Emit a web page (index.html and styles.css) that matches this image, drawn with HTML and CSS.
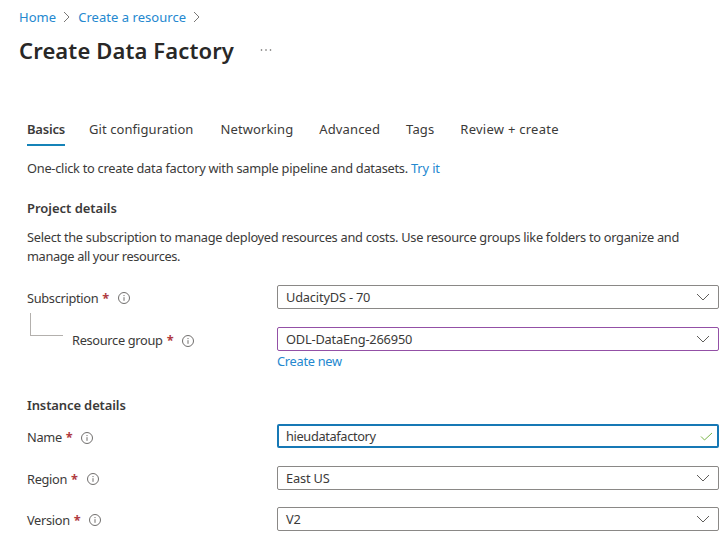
FILE: index.html
```
<!DOCTYPE html>
<html lang="en"><head><meta charset="utf-8"><title>Create Data Factory</title><link rel="stylesheet" href="styles.css"></head>
<body>
<nav class="crumbs"><a>Home</a><svg class="sep" viewBox="0 0 8 12"><path d="M1 1l5 5-5 5"/></svg><a>Create a resource</a><svg class="sep" viewBox="0 0 8 12"><path d="M1 1l5 5-5 5"/></svg></nav>
<header class="title"><h1>Create Data Factory</h1><svg class="more" viewBox="0 0 12 4"><circle cx="1.5" cy="2" r=".8"/><circle cx="6" cy="2" r=".8"/><circle cx="10.5" cy="2" r=".8"/></svg></header>
<main>
<div class="tabs"><span class="tab active">Basics</span><span class="tab git">Git configuration</span><span class="tab">Networking</span><span class="tab">Advanced</span><span class="tab">Tags</span><span class="tab">Review + create</span></div>
<p class="intro"><span>One-click to create data factory with sample pipeline and datasets.</span> <a>Try it</a></p>
<h2>Project details</h2>
<p class="desc"><span>Select the subscription to manage deployed resources and costs. Use resource groups like folders to organize and</span><br><span>manage all your resources.</span></p>
<div class="form project">
<div class="row"><label><span>Subscription</span><b>*</b><svg class="info" viewBox="0 0 12 12"><circle cx="6" cy="6" r="5.5"/><path d="M6 5.2v3.6M6 3v1.1"/></svg></label><div class="field"><span>UdacityDS - 70</span><svg class="chev" viewBox="0 0 14 8"><path d="M1 1l6 6 6-6"/></svg></div></div>
<div class="row group"><label><i class="elbow"></i><span>Resource group</span><b>*</b><svg class="info" viewBox="0 0 12 12"><circle cx="6" cy="6" r="5.5"/><path d="M6 5.2v3.6M6 3v1.1"/></svg></label><div class="field purple"><span>ODL-DataEng-266950</span><svg class="chev" viewBox="0 0 14 8"><path d="M1 1l6 6 6-6"/></svg></div></div>
<a class="new">Create new</a>
</div>
<h2 class="instance">Instance details</h2>
<div class="form fields">
<div class="row name"><label><span>Name</span><b>*</b><svg class="info" viewBox="0 0 12 12"><circle cx="6" cy="6" r="5.5"/><path d="M6 5.2v3.6M6 3v1.1"/></svg></label><div class="field focus"><span>hieudatafactory</span><svg class="check" viewBox="0 0 13 9"><path d="M1 4.5L4.5 8 12 1"/></svg></div></div>
<div class="row"><label><span>Region</span><b>*</b><svg class="info" viewBox="0 0 12 12"><circle cx="6" cy="6" r="5.5"/><path d="M6 5.2v3.6M6 3v1.1"/></svg></label><div class="field"><span>East US</span><svg class="chev" viewBox="0 0 14 8"><path d="M1 1l6 6 6-6"/></svg></div></div>
<div class="row"><label><span>Version</span><b>*</b><svg class="info" viewBox="0 0 12 12"><circle cx="6" cy="6" r="5.5"/><path d="M6 5.2v3.6M6 3v1.1"/></svg></label><div class="field"><span>V2</span><svg class="chev" viewBox="0 0 14 8"><path d="M1 1l6 6 6-6"/></svg></div></div>
</div>
</main>
</body></html>
```
FILE: styles.css
```
*{box-sizing:border-box}
body{margin:0;height:544px;overflow:hidden;background:#fff;color:#3b3a39;font:12.8px/19px "Noto Sans",sans-serif;letter-spacing:-.28px}
svg{fill:none;stroke:currentColor;flex:none}
a{color:#2488cf}
h1,h2,p{margin:0}
.crumbs{display:flex;align-items:center;height:18px;margin-top:8px;padding-left:19px;font-size:13px;letter-spacing:.04px}
.sep{width:8px;height:12px;margin:0 7px;color:#797775}
.title{display:flex;align-items:center;height:32px;margin-top:8px;padding-left:19px}
h1{color:#292827;font-size:22px;font-weight:600;line-height:30px;letter-spacing:.12px;white-space:nowrap}
.more{width:12px;height:4px;margin-left:26px;fill:#605e5c;stroke:none}
main{padding:52px 5px 0 27px}
.tabs{display:flex;height:28px;gap:26px;font-size:13px;letter-spacing:.12px}
.tab{height:28px;line-height:23px;white-space:nowrap}
.git{letter-spacing:.07px;margin-right:1px}
.tab:last-child{letter-spacing:.26px}
.active{font-weight:600;letter-spacing:-.2px;border-bottom:2px solid #1583b8;margin-right:-2px}
.intro{margin-top:13px;white-space:nowrap}
.intro span{letter-spacing:-.26px}
.intro a{letter-spacing:-.1px}
h2{font-size:13px;font-weight:600;line-height:20px;letter-spacing:-.03px;margin-top:20px}
.desc{margin-top:10px;white-space:nowrap}
.desc span:last-child{letter-spacing:-.36px}
.form{display:flex;flex-direction:column;gap:17px}
.row{display:grid;grid-template-columns:250px 442px;height:24px;align-items:center}
label{display:flex;align-items:center;padding-top:2px;letter-spacing:-.32px}
label b{color:#b03a41;margin-left:4px}
.info{width:12px;height:12px;margin-left:9px;color:#605e5c;stroke-width:.9}
.field{display:flex;align-items:center;justify-content:space-between;height:24px;border:1px solid #8a8886;border-radius:2px;padding:0 8px;letter-spacing:-.18px;white-space:nowrap}
.project{margin-top:19px}
.group label{padding-top:3px}
.group{margin-top:1px}
.chev{width:14px;height:8px;color:#605e5c}
.elbow{width:33px;height:23px;border:solid #b3b0ad;border-width:0 0 1px 1px;margin:-32px 9px 0 3px}
.purple{border-color:#9350a6}
.new{margin:-17px 0 0 250px;letter-spacing:-.28px;line-height:21px}
.instance{letter-spacing:-.12px;margin-top:23px}
.fields{margin-top:9px}
.name{margin-bottom:1px}
.name label{padding-top:3px}
.focus{border:2px solid #1678b5;padding:0 4px 0 7px;letter-spacing:-.36px}
.check{width:13px;height:9px;color:#7ab648}
```
